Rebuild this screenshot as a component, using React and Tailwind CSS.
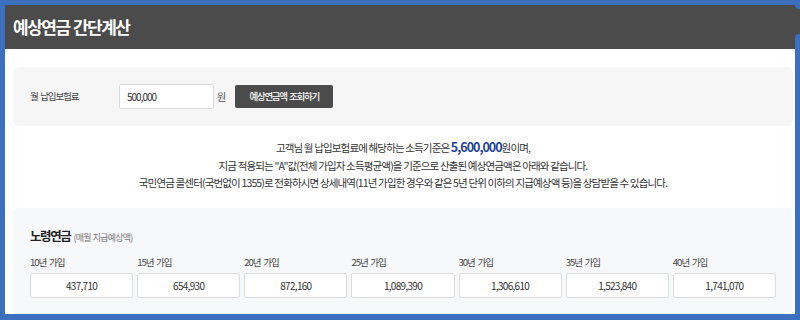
const YEARS = [
  { label: '10년 가입', amount: '437,710' },
  { label: '15년 가입', amount: '654,930' },
  { label: '20년 가입', amount: '872,160' },
  { label: '25년 가입', amount: '1,089,390' },
  { label: '30년 가입', amount: '1,306,610' },
  { label: '35년 가입', amount: '1,523,840' },
  { label: '40년 가입', amount: '1,741,070' },
];

export default function App() {
  return (
    <div
      className="relative w-[800px] h-[320px] overflow-hidden bg-[#3c70be] pt-[5px] pl-[5px] pb-[6px] flex flex-col"
      style={{ fontFamily: '"Noto Sans CJK KR", "Noto Sans", sans-serif' }}
    >
      {/* frame edges */}
      <div className="absolute top-0 right-0 w-[5px] h-[9px] rounded-bl-[4px] bg-[#3c70be] z-10" />
      <div className="absolute top-[34px] right-0 bottom-0 w-[5px] rounded-tl-[4px] bg-[#3c70be] z-10" />

      {/* Header */}
      <div className="h-[44px] shrink-0 bg-[#4a4b4a] flex items-center pl-[8px]">
        <h1 className="text-[17px] font-bold text-white tracking-[-1.5px] [word-spacing:1px]">예상연금 간단계산</h1>
      </div>

      {/* Body */}
      <div className="flex-1 bg-white mr-[5px] pl-[8px] pr-[2px] pt-[18px] overflow-hidden flex flex-col">
        {/* Input panel */}
        <div className="h-[59px] shrink-0 bg-[#f6f6f6] rounded-[6px] flex items-center pl-[17px]">
          <span className="w-[89px] text-[9.5px] tracking-[-1.1px] [word-spacing:1.5px] text-[#444]">월 납입보험료</span>
          <input
            defaultValue="500,000"
            className="w-[95px] h-[25px] bg-white border border-[#dcdcdc] rounded-[2px] px-[7px] text-[10px] tracking-[-1px] text-[#333] outline-none"
          />
          <span className="ml-[3px] text-[10px] text-[#555]">원</span>
          <button className="ml-[9px] w-[98px] h-[23px] bg-[#4a4b4a] rounded-[2px] text-[9.5px] tracking-[-1.3px] [word-spacing:1.5px] text-white font-medium">
            예상연금액 조회하기
          </button>
        </div>

        {/* Description */}
        <div className="mt-[12px] text-center text-[10.5px] tracking-[-0.85px] leading-[17.5px] text-[#333]">
          <p>
            고객님 월 납입보험료에 해당하는 소득기준은{' '}
            <strong className="text-[12.5px] tracking-[-1px] font-bold text-[#1d3f9e]">5,600,000</strong>원이며,
          </p>
          <p>지금 적용되는 "A"값(전체 가입자 소득평균액)을 기준으로 산출된 예상연금액은 아래와 같습니다.</p>
          <p>국민연금 콜센터(국번없이 1355)로 전화하시면 상세내역(11년 가입한 경우와 같은 5년 단위 이하의 지급예상액 등)을 상담받을 수 있습니다.</p>
        </div>

        {/* Old-age pension panel */}
        <div className="mt-[16px] flex-1 bg-[#f7f8fa] rounded-t-[6px] px-[17px] pt-[19px]">
          <div className="flex items-baseline gap-[3px] h-[20px]">
            <span className="text-[12.5px] tracking-[-1.4px] font-bold text-[#222]">노령연금</span>
            <span className="text-[9px] tracking-[-0.8px] [word-spacing:1px] text-[#777]">(매월 지급예상액)</span>
          </div>
          <div className="mt-[8px] grid grid-cols-7 gap-x-[4px]">
            {YEARS.map((y) => (
              <div key={y.label} className="flex flex-col">
                <span className="h-[14px] leading-[14px] text-[9.5px] tracking-[-1px] [word-spacing:1.5px] text-[#444]">{y.label}</span>
                <div className="mt-[4px] h-[25px] bg-white border border-[#dcdcdc] rounded-[2px] flex items-center justify-center text-[10px] tracking-[-0.7px] text-[#333]">
                  {y.amount}
                </div>
              </div>
            ))}
          </div>
        </div>
      </div>
    </div>
  );
}
